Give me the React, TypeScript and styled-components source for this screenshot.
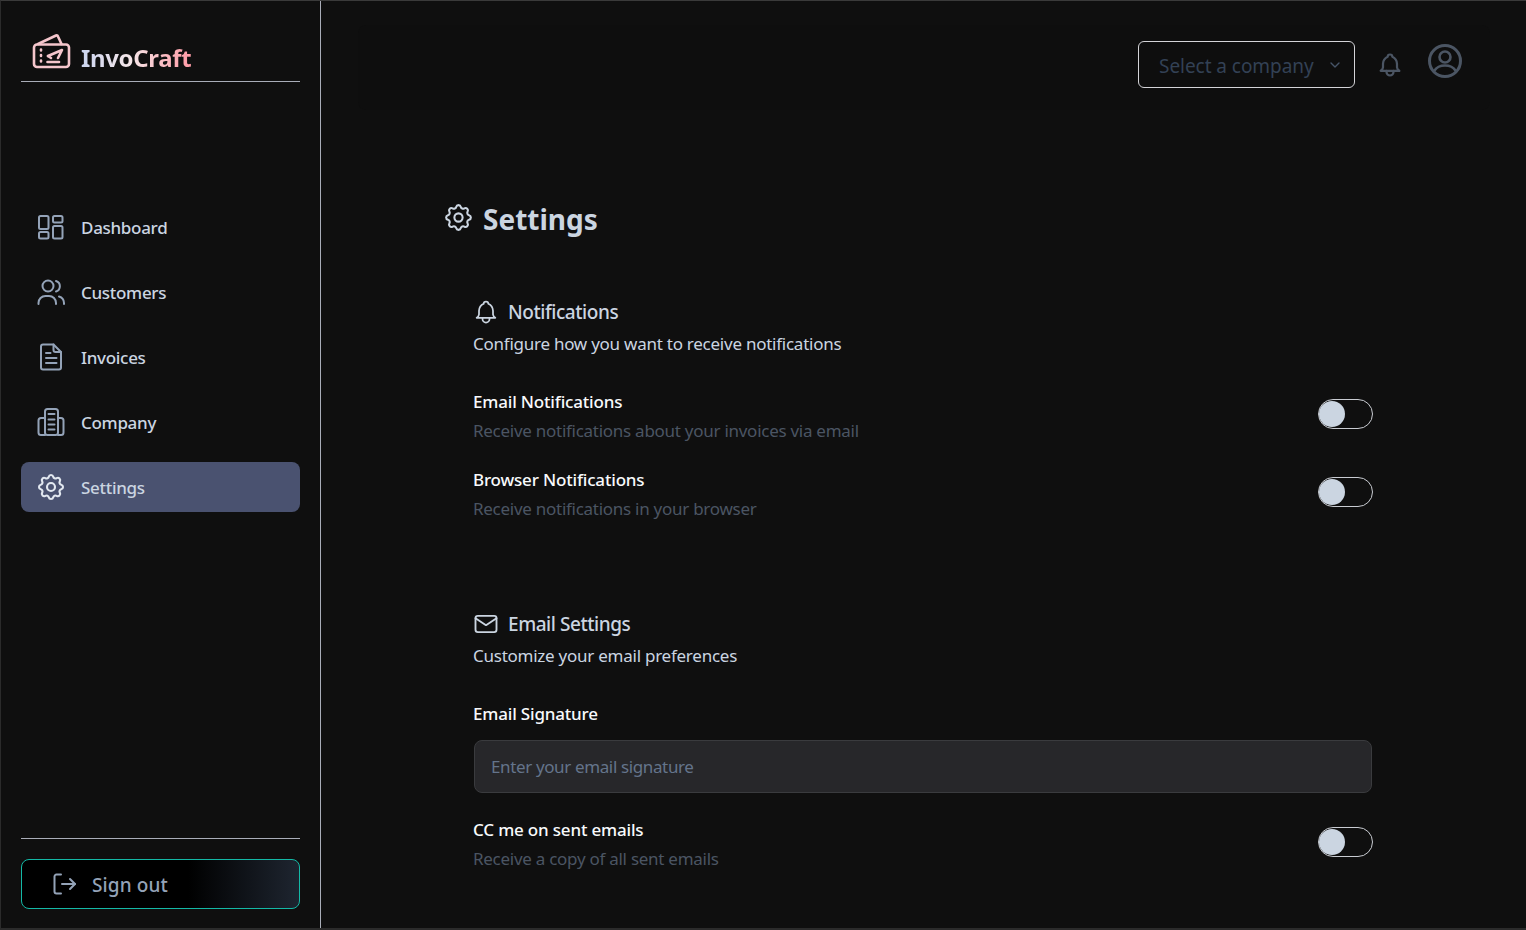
import styled, { createGlobalStyle } from "styled-components";
import { TbSettings, TbBell, TbMail, TbChevronDown } from "react-icons/tb";

const GlobalStyle = createGlobalStyle`
  html, body {
    margin: 0;
    padding: 0;
    height: 100%;
    background: #0f0f0f;
  }
  * { box-sizing: border-box; }
  body {
    font-family: "Noto Sans", "Open Sans", sans-serif;
    overflow: hidden;
  }
`;

const LogoIcon = () => (
  <svg width="40" height="36" viewBox="0 0 40 36" fill="none" stroke="#f5c6cc" strokeWidth="2.6" strokeLinecap="round" strokeLinejoin="round">
    <rect x="3" y="11.500" width="35" height="22.500" rx="3" />
    <path d="M7 11 25 2.500q1.500-.5 2 1L30.500 11" />
    <path d="M10 16.500v1M10 22v1M10 27.500v1" />
    <path d="M17 23 31 17l-4 8" />
    <path d="m17 23 3 2" />
    <path d="M16.500 29H28" />
  </svg>
);

const DashboardIcon = () => (
  <svg width="30" height="30" viewBox="0 0 30 30" fill="none" stroke="currentColor" strokeWidth="2" strokeLinejoin="round">
    <rect x="3" y="4" width="9.500" height="13" rx="1.500" />
    <rect x="17" y="4" width="9.500" height="6.500" rx="1.500" />
    <rect x="3" y="20" width="9.500" height="6.500" rx="1.500" />
    <rect x="17" y="14" width="9.500" height="12.500" rx="1.500" />
  </svg>
);

const UsersIcon = () => (
  <svg width="30" height="30" viewBox="0 0 30 30" fill="none" stroke="currentColor" strokeWidth="2" strokeLinecap="round" strokeLinejoin="round">
    <circle cx="12" cy="9" r="5.500" />
    <path d="M2.500 27v-1a7 7 0 0 1 7-7h3.500a7 7 0 0 1 7 7v1" />
    <path d="M20 4a5.500 5.500 0 0 1 0 10.500" />
    <path d="M23 19.500a7 7 0 0 1 5 6.500v1" />
  </svg>
);

const FileIcon = () => (
  <svg width="30" height="30" viewBox="0 0 30 30" fill="none" stroke="currentColor" strokeWidth="2" strokeLinecap="round" strokeLinejoin="round">
    <path d="M7 2.500h10.500L25 10v15.500a2 2 0 0 1-2 2H7a2 2 0 0 1-2-2v-21a2 2 0 0 1 2-2z" />
    <path d="M17.500 2.500V8a2 2 0 0 0 2 2H25" />
    <path d="M10 11h4.500M10 16h10.500M10 21h10.500" />
  </svg>
);

const BuildingIcon = () => (
  <svg width="30" height="30" viewBox="0 0 30 30" fill="none" stroke="currentColor" strokeWidth="2" strokeLinecap="round" strokeLinejoin="round">
    <rect x="9" y="2" width="13" height="26" rx="2.500" />
    <path d="M9 11H5a2.500 2.500 0 0 0-2.500 2.500v12A2.500 2.500 0 0 0 5 28h4" />
    <path d="M22 11h3a2.500 2.500 0 0 1 2.500 2.500v12A2.500 2.500 0 0 1 25 28h-3" />
    <path d="M12.500 7h6M12.500 12.500h6M12.500 17.500h6M12.500 22.500h6" />
  </svg>
);

const SignOutIcon = () => (
  <svg width="24" height="24" viewBox="0 0 24 24" fill="none" stroke="currentColor" strokeWidth="2" strokeLinecap="round" strokeLinejoin="round">
    <path d="M8 2.500H3.500a2 2 0 0 0-2 2v15a2 2 0 0 0 2 2H8" />
    <path d="M9 12h13" />
    <path d="m17 7 5 5-5 5" />
  </svg>
);

const UserCircleIcon = () => (
  <svg width="36" height="36" viewBox="0 0 36 36" fill="none" stroke="currentColor" strokeWidth="3" strokeLinecap="round">
    <circle cx="18" cy="18" r="15.500" />
    <circle cx="18" cy="14" r="5.500" strokeWidth="2.600" />
    <path d="M7.500 27.500c2.500-4 6.500-5 10.500-5s8 1 10.500 5" strokeWidth="2.600" />
  </svg>
);

const navItems = [
  { title: "Dashboard", icon: <DashboardIcon /> },
  { title: "Customers", icon: <UsersIcon /> },
  { title: "Invoices", icon: <FileIcon /> },
  { title: "Company", icon: <BuildingIcon /> },
  { title: "Settings", icon: <TbSettings size={32} strokeWidth={1.6} />, active: true },
];

const Toggle = () => (
  <Switch>
    <Knob />
  </Switch>
);

export default function App() {
  return (
    <Page>
      <GlobalStyle />
      <Sidebar>
        <Brand>
          <LogoBox>
            <LogoIcon />
          </LogoBox>
          <BrandName>InvoCraft</BrandName>
        </Brand>
        <Nav>
          {navItems.map((item) => (
            <NavItem key={item.title} $active={item.active}>
              <NavIcon $active={item.active}>{item.icon}</NavIcon>
              <span>{item.title}</span>
            </NavItem>
          ))}
        </Nav>
        <SidebarFooter>
          <SignOut>
            <SignOutIcon />
            <span>Sign out</span>
          </SignOut>
        </SidebarFooter>
      </Sidebar>
      <Main>
        <TopBar>
          <CompanySelect>
            <span>Select a company</span>
            <TbChevronDown size={16} />
          </CompanySelect>
          <BellButton>
            <TbBell size={28} strokeWidth={1.9} />
          </BellButton>
          <UserButton>
            <UserCircleIcon />
          </UserButton>
        </TopBar>
        <Content>
          <PageTitle>
            <TbSettings size={33} strokeWidth={1.5} />
            Settings
          </PageTitle>
          <Section>
            <SectionTitle>
              <TbBell size={28} strokeWidth={1.5} />
              Notifications
            </SectionTitle>
            <SectionDesc>Configure how you want to receive notifications</SectionDesc>
            <Rows>
              <Row>
                <div>
                  <RowLabel>Email Notifications</RowLabel>
                  <RowHint>Receive notifications about your invoices via email</RowHint>
                </div>
                <Toggle />
              </Row>
              <Row>
                <div>
                  <RowLabel>Browser Notifications</RowLabel>
                  <RowHint>Receive notifications in your browser</RowHint>
                </div>
                <Toggle />
              </Row>
            </Rows>
          </Section>
          <Section $second>
            <SectionTitle>
              <TbMail size={28} strokeWidth={1.6} />
              Email Settings
            </SectionTitle>
            <SectionDesc>Customize your email preferences</SectionDesc>
            <FieldLabel>Email Signature</FieldLabel>
            <SignatureInput>Enter your email signature</SignatureInput>
            <Row $tight>
              <div>
                <RowLabel>CC me on sent emails</RowLabel>
                <RowHint>Receive a copy of all sent emails</RowHint>
              </div>
              <Toggle />
            </Row>
          </Section>
        </Content>
      </Main>
    </Page>
  );
}

const Page = styled.div`
  display: flex;
  width: 1526px;
  height: 930px;
  background: #0f0f0f;
  border-top: 1px solid #3a3a3a;
  border-bottom: 2px solid #2b2b2b;
  border-left: 1px solid #2b2b2b;
  overflow: hidden;
`;

const Sidebar = styled.aside`
  width: 320px;
  flex: none;
  display: flex;
  flex-direction: column;
  padding: 0 20px 19px;
  border-right: 1px solid #a9adb8;
`;

const Brand = styled.div`
  height: 81px;
  display: flex;
  align-items: flex-end;
  gap: 10px;
  padding: 0 0 7px 10px;
  border-bottom: 1px solid #a9adb8;
`;

const LogoBox = styled.span`
  display: flex;
  margin-bottom: 5px;
`;

const BrandName = styled.span`
  font-size: 24px;
  font-weight: 700;
  line-height: 32px;
  letter-spacing: -0.35px;
  background: linear-gradient(90deg, #cbd5f0 0%, #f5e6e8 45%, #ff9aa5 100%);
  -webkit-background-clip: text;
  background-clip: text;
  color: transparent;
`;

const Nav = styled.nav`
  margin-top: 120px;
  display: flex;
  flex-direction: column;
  gap: 15px;
`;

const NavItem = styled.div<{ $active?: boolean }>`
  height: 50px;
  display: flex;
  align-items: center;
  gap: 15px;
  padding-left: 15px;
  border-radius: 8px;
  font-size: 17px;
  font-weight: 500;
  letter-spacing: -0.3px;
  color: #cbd5e1;
  background: ${(p) => (p.$active ? "#4a5270" : "transparent")};
`;

const NavIcon = styled.span<{ $active?: boolean }>`
  width: 30px;
  height: 30px;
  display: flex;
  align-items: center;
  justify-content: center;
  color: ${(p) => (p.$active ? "#e2e8f0" : "#94a3b8")};
  svg {
    flex: none;
  }
`;

const SidebarFooter = styled.div`
  margin-top: auto;
  padding-top: 20px;
  border-top: 1px solid #a9adb8;
`;

const SignOut = styled.button`
  width: 100%;
  height: 50px;
  display: flex;
  align-items: center;
  gap: 15px;
  padding: 0 0 0 31px;
  border: 1px solid #14b8a6;
  border-radius: 8px;
  background: linear-gradient(90deg, #000 0%, #000 60%, #1e2530 100%);
  color: #94a3b8;
  font-family: inherit;
  font-size: 19px;
  font-weight: 500;
  letter-spacing: 0.1px;
  span {
    margin-top: 2px;
  }
`;

const Main = styled.main`
  flex: 1;
  display: flex;
  flex-direction: column;
  min-width: 0;
`;

const TopBar = styled.header`
  height: 85px;
  flex: none;
  margin: 24px 36px 0 37px;
  display: flex;
  align-items: flex-start;
  justify-content: flex-end;
  padding: 16px 27px 0 0;
  background: #0e0e0e;
  border-radius: 8px;
`;

const CompanySelect = styled.div`
  width: 217px;
  height: 47px;
  flex: none;
  display: flex;
  align-items: center;
  justify-content: space-between;
  padding: 0 11px 0 20px;
  border: 1px solid #d4d4d8;
  border-radius: 6px;
  color: #334155;
  font-size: 19px;
  letter-spacing: -0.05px;
  span {
    margin-top: 2px;
  }
  svg {
    color: #475569;
  }
`;

const BellButton = styled.div`
  margin: 10px 0 0 21px;
  color: #4b5563;
  display: flex;
`;

const UserButton = styled.div`
  margin: 2px 0 0 23px;
  color: #4b5563;
  display: flex;
`;

const Content = styled.div`
  padding: 86px 153px 0 121px;
`;

const PageTitle = styled.h1`
  margin: 0;
  display: flex;
  align-items: center;
  gap: 8px;
  height: 46px;
  font-size: 28px;
  font-weight: 700;
  color: #cbd5e1;
  svg {
    margin-top: -4px;
  }
`;

const Section = styled.section<{ $second?: boolean }>`
  margin: ${(p) => (p.$second ? "85px" : "54px")} 0 0 31px;
`;

const SectionTitle = styled.h2`
  margin: 0;
  height: 32px;
  display: flex;
  align-items: center;
  gap: 8px;
  font-size: 19px;
  font-weight: 500;
  letter-spacing: -0.45px;
  color: #cbd5e1;
  svg {
    margin-left: -1px;
  }
`;

const SectionDesc = styled.p`
  margin: 1px 0 0;
  font-size: 17px;
  line-height: 30px;
  letter-spacing: -0.25px;
  color: #cbd5e1;
`;

const Rows = styled.div`
  margin-top: 28px;
  display: flex;
  flex-direction: column;
  gap: 20px;
`;

const Row = styled.div<{ $tight?: boolean }>`
  display: flex;
  align-items: center;
  justify-content: space-between;
  margin-top: ${(p) => (p.$tight ? "22px" : "0")};
`;

const RowLabel = styled.div`
  font-size: 17px;
  font-weight: 500;
  line-height: 29px;
  letter-spacing: -0.18px;
  color: #f8fafc;
`;

const RowHint = styled.div`
  font-size: 17px;
  line-height: 29px;
  letter-spacing: -0.27px;
  color: #4b5563;
`;

const FieldLabel = styled.div`
  margin-top: 28px;
  font-size: 17px;
  font-weight: 500;
  line-height: 29px;
  letter-spacing: -0.18px;
  color: #f8fafc;
`;

const SignatureInput = styled.div`
  margin: 12px 1px 0;
  height: 53px;
  display: flex;
  align-items: center;
  padding: 0 16px;
  border: 1px solid #3a3b3e;
  border-radius: 8px;
  background: #27272a;
  color: #64748b;
  font-size: 17px;
  letter-spacing: -0.37px;
`;

const Switch = styled.div`
  width: 55px;
  height: 30px;
  flex: none;
  margin-bottom: 5px;
  display: flex;
  align-items: center;
  border: 1px solid #c9ccd2;
  border-radius: 15px;
`;

const Knob = styled.span`
  width: 26px;
  height: 26px;
  border-radius: 50%;
  background: #cbd5e1;
`;
